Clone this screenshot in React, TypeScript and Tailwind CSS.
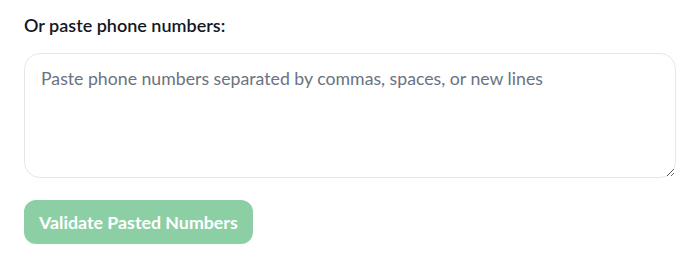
export default function App() {
  return (
    <div className="bg-white px-6 pt-3 w-[693px] h-[253px]" style={{ fontFamily: "Lato, 'Noto Sans', sans-serif" }}>
      <label className="block text-[18px] leading-[27px] font-semibold text-[#111827] mb-[14px]">Or paste phone numbers:</label>
      <textarea
        rows={4}
        className="block w-[652px] h-[125px] rounded-2xl border border-[#e5e7eb] px-4 py-[11px] text-[17.7px] leading-[27px] text-[#111827] placeholder:text-[#6b7280] outline-none"
        placeholder="Paste phone numbers separated by commas, spaces, or new lines"
      />
      <button className="mt-[22px] h-[44px] px-[15px] rounded-xl bg-[#8ccfa5] text-white text-[17.8px] font-bold">
        Validate Pasted Numbers
      </button>
    </div>
  );
}
